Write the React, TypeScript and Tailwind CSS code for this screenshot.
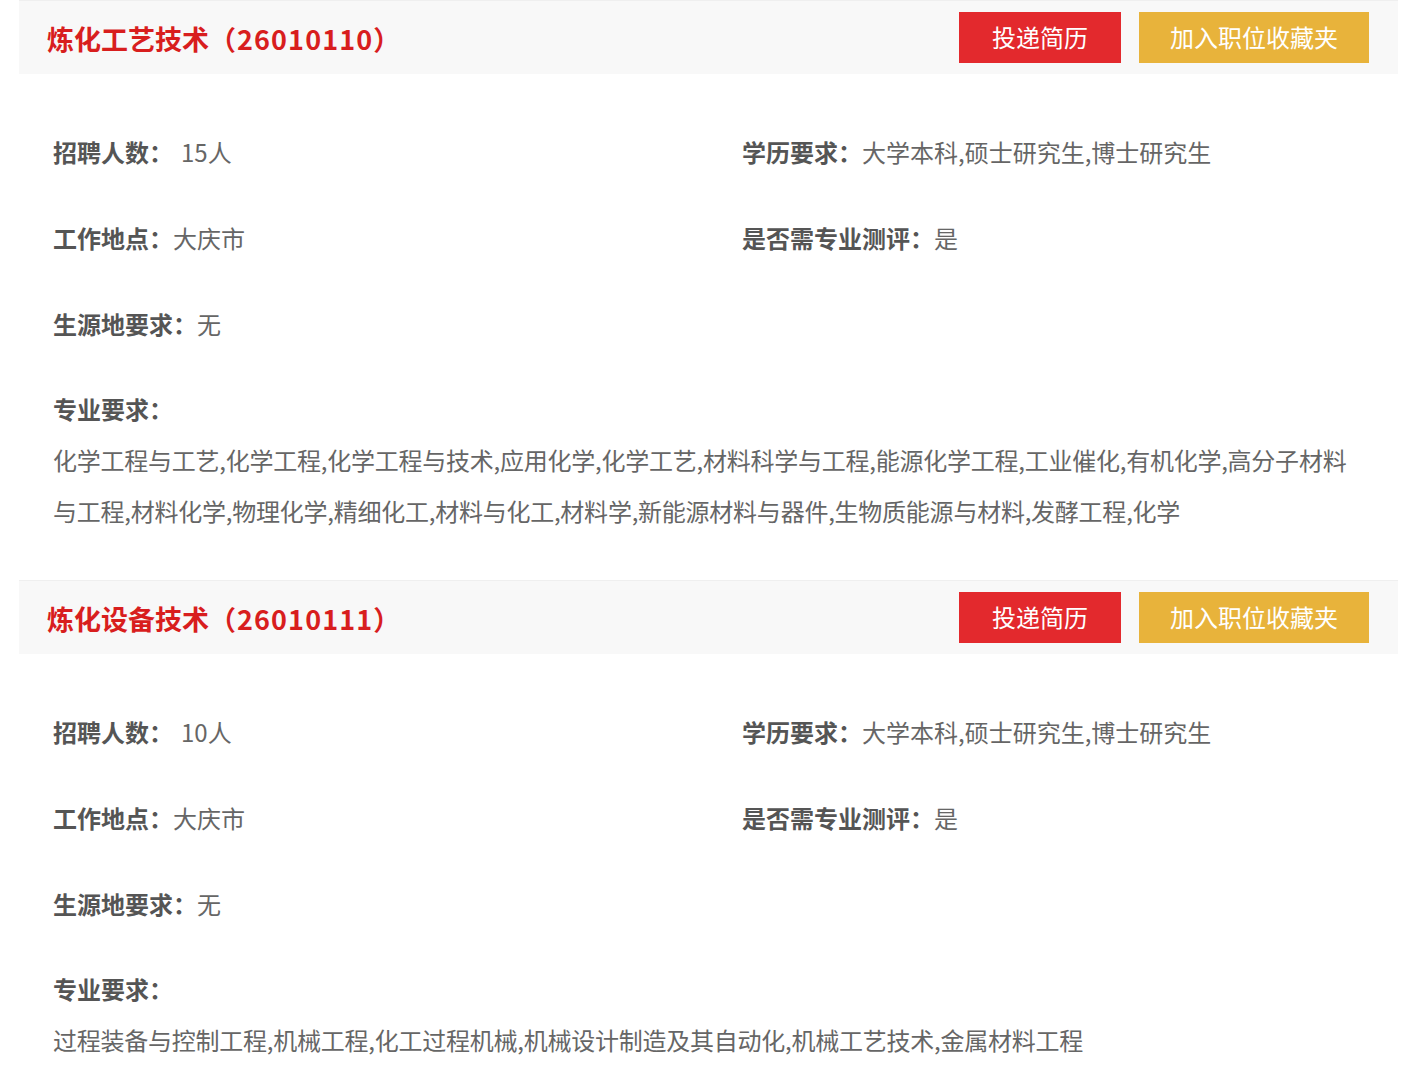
const jobs = [
	{
		name: "炼化工艺技术",
		code: "26010110",
		count: "15人",
		place: "大庆市",
		education: "大学本科,硕士研究生,博士研究生",
		assess: "是",
		origin: "无",
		majors:
			"化学工程与工艺,化学工程,化学工程与技术,应用化学,化学工艺,材料科学与工程,能源化学工程,工业催化,有机化学,高分子材料与工程,材料化学,物理化学,精细化工,材料与化工,材料学,新能源材料与器件,生物质能源与材料,发酵工程,化学",
	},
	{
		name: "炼化设备技术",
		code: "26010111",
		count: "10人",
		place: "大庆市",
		education: "大学本科,硕士研究生,博士研究生",
		assess: "是",
		origin: "无",
		majors:
			"过程装备与控制工程,机械工程,化工过程机械,机械设计制造及其自动化,机械工艺技术,金属材料工程",
	},
];

type Job = (typeof jobs)[number];

function Field(props: { label: string; value: string; spaced?: boolean }) {
	return (
		<div className="flex items-center">
			<span className="font-bold text-[#555]">{props.label}：</span>
			<span className="text-[#666]">
				{props.spaced ? <span className="inline-block w-2" /> : null}
				{props.value}
			</span>
		</div>
	);
}

function JobCard(props: { job: Job }) {
	const { job } = props;
	return (
		<section className="pb-[44px]">
			<div className="flex h-[74px] items-center justify-between border-t border-[#efefef] bg-[#f8f8f8] pr-[29px] pl-[28px]">
				<h2 className="mt-1 font-bold text-[27px] text-[#d81e1e]">
					{job.name}
					<span className="tracking-[0.04em]">（{job.code}）</span>
				</h2>
				<div className="-mt-px flex gap-[18px]">
					<button className="h-[51px] w-[162px] bg-[#e3292d] text-[24px] text-white">
						投递简历
					</button>
					<button className="h-[51px] w-[230px] bg-[#e8b33b] text-[24px] text-white">
						加入职位收藏夹
					</button>
				</div>
			</div>
			<div className="pt-[35px] pr-[34px] pl-[34px] text-[24px]">
				<div className="flex h-[86px] items-center">
					<div className="w-[689px]">
						<Field label="招聘人数" value={job.count} spaced />
					</div>
					<Field label="学历要求" value={job.education} />
				</div>
				<div className="flex h-[86px] items-center">
					<div className="w-[689px]">
						<Field label="工作地点" value={job.place} />
					</div>
					<Field label="是否需专业测评" value={job.assess} />
				</div>
				<div className="flex h-[86px] items-center">
					<Field label="生源地要求" value={job.origin} />
				</div>
				<div className="mt-[16px] font-bold leading-[51px] text-[#555]">
					专业要求：
				</div>
				<p className="leading-[51px] tracking-[-0.01em] text-[#666]">
					{job.majors}
				</p>
			</div>
		</section>
	);
}

export default function App() {
	return (
		<div
			className="min-h-screen bg-white pr-[22px] pl-[19px]"
			style={{ fontFamily: '"Noto Sans CJK SC", "Noto Sans", sans-serif' }}
		>
			{jobs.map((job) => (
				<JobCard job={job} key={job.code} />
			))}
		</div>
	);
}
